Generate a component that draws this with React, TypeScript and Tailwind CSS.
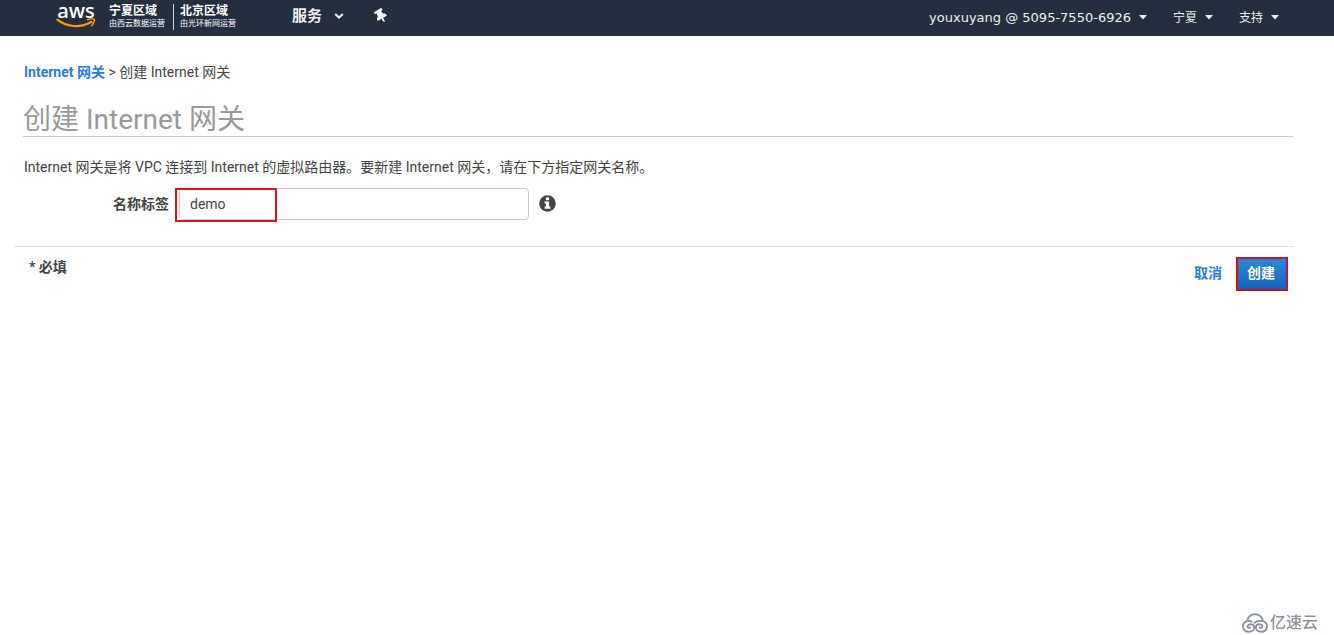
import type { ReactNode } from "react"
import { FaThumbtack } from "react-icons/fa"

const regions = [
  { name: "宁夏区域", operator: "由西云数据运营" },
  { name: "北京区域", operator: "由光环新网运营" },
]

function AwsLogo() {
  return (
    <a href="#" className="-mt-1.5 flex w-10 flex-col items-center text-white">
      <span className="font-['Open_Sans',sans-serif] text-[20px] leading-5 font-semibold">aws</span>
      <svg width="40" height="12" viewBox="0 0 40 12" fill="none" className="-mt-1 shrink-0">
        <path d="M1.4 2.6C11 10.6 25 10.8 35.2 5" stroke="#f90" strokeWidth="2.2" strokeLinecap="round" />
        <path d="M31.6 2.8C34 1.8 37.4 1.6 38.2 2.2C38.8 3.2 37.6 6.8 35.8 8.6" stroke="#f90" strokeWidth="1.5" strokeLinecap="round" />
      </svg>
    </a>
  )
}

function Caret() {
  return (
    <svg width="8" height="5" viewBox="0 0 8 5" fill="currentColor">
      <path d="M0 0h8L4 4.6z" />
    </svg>
  )
}

function MenuButton({ children }: { children: ReactNode }) {
  return (
    <button type="button" className="flex items-center gap-2 whitespace-nowrap">
      {children}
      <Caret />
    </button>
  )
}

function Header() {
  return (
    <header className="flex h-9 items-center justify-between bg-[#232f3e] pr-[55px] pl-14 text-[#eee]">
      <div className="flex items-center">
        <AwsLogo />
        <div className="-mt-0.5 ml-3 flex h-6 items-center">
          {regions.map((region, i) => (
            <div
              key={region.name}
              className={
                i === 0
                  ? "border-r border-gray-300 px-px pr-2 whitespace-nowrap text-white"
                  : "pl-1.5 whitespace-nowrap text-white"
              }
            >
              <div className="text-xs leading-[14px] font-bold">{region.name}</div>
              <div className="text-[8px] leading-3">{region.operator}</div>
            </div>
          ))}
        </div>
        <button type="button" className="-mt-1 ml-14 flex items-center gap-3 text-[15px] leading-5 font-bold">
          服务
          <svg width="10" height="6" viewBox="0 0 10 6" fill="none">
            <path d="M1.2 1L5 4.6L8.8 1" stroke="currentColor" strokeWidth="2" />
          </svg>
        </button>
        <button type="button" aria-label="固定" className="-mt-1 ml-7 p-0.5">
          <FaThumbtack size={14} className="-rotate-30 text-white" />
        </button>
      </div>
      <nav className="flex items-center gap-[26px] font-['DejaVu_Sans','Noto_Sans_CJK_SC',sans-serif] text-xs">
        <MenuButton>
          <span className="text-[13px]">youxuyang @ 5095-7550-6926</span>
        </MenuButton>
        <MenuButton>宁夏</MenuButton>
        <MenuButton>支持</MenuButton>
      </nav>
    </header>
  )
}

function InfoIcon() {
  return (
    <svg width="17" height="17" viewBox="0 0 17 17">
      <circle cx="8.5" cy="8.5" r="8.3" fill="currentColor" />
      <path d="M6.9 2.6h3.2v2.6H6.9zM5.6 6.4h4.5v5.2h1.3v2.2H5.6v-2.2h1.3v-3H5.6z" fill="#fff" />
    </svg>
  )
}

function Watermark() {
  return (
    <div className="fixed right-4 bottom-0 flex items-center gap-0.5 text-base text-[#8a939c]">
      <svg width="26" height="20" viewBox="0 0 26 20" fill="none" stroke="currentColor" strokeWidth="1.9" strokeLinecap="round">
        <path d="M5.4 7.6C5.8 3.8 9 1.2 13 1.2C17 1.2 20.2 3.8 20.6 7.6" />
        <path d="M9.6 8.6C5 6.2 1 9.4 1 13.2C1 16.4 3.4 18.8 6.8 18.8C10 18.8 12.2 17 12.2 14.6C12.2 12.4 10.4 11.2 8.6 11.2C6.8 11.2 5.4 12.4 5.6 13.8C5.8 14.8 7.2 15.2 8.2 14.6" />
        <path d="M12.4 9.8C17 6.2 25 8 25 13.2C25 16.4 22.6 18.8 19.2 18.8C16 18.8 13.8 17 13.8 14.6C13.8 12.4 15.6 11.2 17.4 11.2C19.2 11.2 20.6 12.4 20.4 13.8C20.2 14.8 18.8 15.2 17.8 14.6" />
      </svg>
      <span className="font-medium">亿速云</span>
    </div>
  )
}

export default function App() {
  return (
    <div className="bg-white font-['Roboto','Noto_Sans_CJK_SC',sans-serif] text-sm text-[#444]">
      <Header />
      <main className="pt-[26px] pr-10 pl-3.5">
        <div className="pl-[9px]">
          <nav className="pl-px leading-5">
            <a href="#" className="font-bold text-[#2a7dd6]">
              Internet 网关
            </a>
            {" > "}
            <span>创建 Internet 网关</span>
          </nav>
          <h1 className="mt-[22px] border-b border-[#ccc] text-[28px] leading-8 text-[#999]">创建 Internet 网关</h1>
          <p className="mt-5 pl-px leading-5">
            Internet 网关是将 VPC 连接到 Internet 的虚拟路由器。要新建 Internet 网关，请在下方指定网关名称。
          </p>
        </div>

        <form>
          <div className="mt-[11px] flex items-center">
            <label htmlFor="name-tag" className="w-[155px] text-right font-bold">
              名称标签
            </label>
            <div className="relative ml-2.5 w-[350px]">
              <input
                id="name-tag"
                type="text"
                defaultValue="demo"
                className="block h-8 w-full rounded border border-[#ccc] px-2.5 outline-none"
              />
              <div className="pointer-events-none absolute top-0 -left-1 h-[34px] w-[102px] border-2 border-[#d9141c]" />
            </div>
            <button type="button" aria-label="名称标签说明" className="ml-2.5 pb-0.5">
              <InfoIcon />
            </button>
          </div>

          <div className="mt-[26px] flex items-start justify-between border-t border-[#ddd] pt-2.5 pr-1.5 pl-[15px]">
            <span className="leading-5 font-bold">* 必填</span>
            <div className="flex items-center gap-3.5 font-bold">
              <a href="#" className="pb-0.5 text-[#2a7dd6]">
                取消
              </a>
              <button
                type="submit"
                className="h-[34px] w-[52px] border-2 border-[#c4142b] bg-linear-to-b from-[#2b88d9] to-[#1663b8] pr-0.5 pb-0.5 text-white"
              >
                创建
              </button>
            </div>
          </div>
        </form>
      </main>
      <Watermark />
    </div>
  )
}
